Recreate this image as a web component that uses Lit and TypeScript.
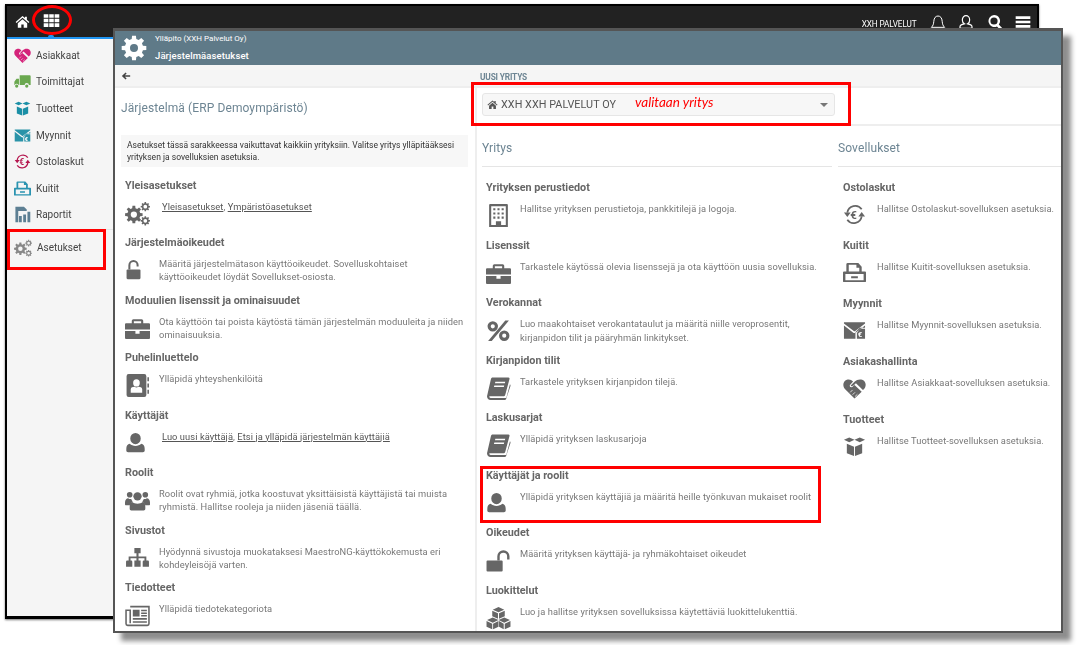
import { LitElement, html, css, svg } from "lit";
import { customElement } from "lit/decorators.js";

const gearPath = (cx: number, cy: number, r: number, hole: number, teeth = 8) => {
  let d = "";
  const step = (Math.PI * 2) / teeth;
  const ro = r, ri = r * 0.74;
  for (let i = 0; i < teeth; i++) {
    const a = i * step;
    const pts = [[ri, a - step * 0.32], [ro, a - step * 0.2], [ro, a + step * 0.2], [ri, a + step * 0.32]];
    for (const [rad, t] of pts) {
      d += `${d ? "L" : "M"}${(cx + rad * Math.cos(t)).toFixed(2)} ${(cy + rad * Math.sin(t)).toFixed(2)}`;
    }
  }
  d += `Z M${cx + hole} ${cy}a${hole} ${hole} 0 1 0 ${-2 * hole} 0a${hole} ${hole} 0 1 0 ${2 * hole} 0Z`;
  return d;
};

const I: Record<string, any> = {
  home: svg`<path d="M12 3 1 12.6l1.4 1.6L12 6l9.6 8.2 1.4-1.6-4-3.5V4.2h-3v2.3zM4.5 14.6V22h5.6v-5.4h3.8V22h5.6v-7.4L12 8.4z"/>`,
  grid: svg`<path d="M1 3h6.6v5.2H1zM8.8 3h6.4v5.2H8.8zM16.4 3H23v5.2h-6.6zM1 9.4h6.6v5.2H1zM8.8 9.4h6.4v5.2H8.8zM16.4 9.4H23v5.2h-6.6zM1 15.8h6.6V21H1zM8.8 15.8h6.4V21H8.8zM16.4 15.8H23V21h-6.6z"/>`,
  arrow: svg`<path d="M11 3.500 2 12l9 8.500 2.500-2.500-4.200-4H22v-4H9.300l4.200-4z"/>`,
  bell: svg`<path fill="none" stroke="currentColor" stroke-width="1.500" d="M2 20h20c-2.500-2-3.400-5-3.700-9C18 6 15.600 3 12 3S6 6 5.700 11C5.400 15 4.500 18 2 20z"/><path d="M9.500 21h5a2.500 2 0 0 1-5 0z"/>`,
  usero: svg`<path fill="none" stroke="currentColor" stroke-width="1.800" d="M12 2.500a5.500 6.500 0 0 1 5.500 6.500c0 2.500-1.200 4.600-3 5.700 3.800.8 6.500 2.500 6.500 4.300v2.500H3V19c0-1.800 2.700-3.500 6.500-4.300-1.800-1.100-3-3.200-3-5.700A5.500 6.500 0 0 1 12 2.500z"/>`,
  search: svg`<path d="M10.500 1.500a9 9 0 0 1 7.200 14.400l5 5-2.800 2.800-5-5A9 9 0 1 1 10.500 1.500zm0 3.600a5.400 5.400 0 1 0 0 10.800 5.400 5.400 0 0 0 0-10.800z"/>`,
  bars: svg`<path d="M1 3.500h22v4H1zM1 10h22v4H1zM1 16.500h22v4H1z"/>`,
  gear: svg`<path fill-rule="evenodd" d="${gearPath(12, 12, 11.500, 3.700)}"/>`,
  gears: svg`<path fill-rule="evenodd" d="${gearPath(8.500, 13, 8.500, 3)}"/><path fill-rule="evenodd" d="${gearPath(19.500, 5.500, 4.500, 1.800)}"/><path fill-rule="evenodd" d="${gearPath(19.500, 19, 4.500, 1.800)}"/>`,
  unlock: svg`<path d="M3 12h13.500a1.200 1.200 0 0 1 1.200 1.200v8.600a1.200 1.200 0 0 1-1.200 1.200H3a1.200 1.200 0 0 1-1.200-1.200v-8.600A1.200 1.200 0 0 1 3 12z"/><path fill="none" stroke="currentColor" stroke-width="2.300" d="M5 12V7a4.700 4.700 0 0 1 9.400 0v1.500"/>`,
  unlock2: svg`<path d="M1.500 12H15a1 1 0 0 1 1 1v8.500a1 1 0 0 1-1 1H1.500a1 1 0 0 1-1-1V13a1 1 0 0 1 1-1z"/><path fill="none" stroke="currentColor" stroke-width="2.300" d="M12 12V8a4.700 4.700 0 0 1 9.400 0v3"/>`,
  case: svg`<path fill-rule="evenodd" d="M8 3h8a1.500 1.500 0 0 1 1.500 1.500V7H23a1 1 0 0 1 1 1v5H0V8a1 1 0 0 1 1-1h5.500V4.500A1.500 1.500 0 0 1 8 3zm.500 2v2h7V5z"/><path d="M0 14.500h10V17h4v-2.500h10V21a1 1 0 0 1-1 1H1a1 1 0 0 1-1-1z"/>`,
  contact: svg`<path fill-rule="evenodd" d="M3.500 1h15A2 2 0 0 1 20.500 3v18a2 2 0 0 1-2 2h-15a2 2 0 0 1-2-2V3a2 2 0 0 1 2-2zM11 6a3.200 3.500 0 1 0 0 7 3.200 3.500 0 0 0 0-7zm-5.500 9.500V19h11v-3.500c0-1.500-2-2.300-3.500-2.300-.8.500-1.500.8-2 .8s-1.200-.3-2-.8c-1.500 0-3.500.8-3.500 2.300z"/><path d="M21.500 4H23v4h-1.500zM21.500 10H23v4h-1.500zM21.500 16H23v4h-1.500z"/>`,
  user: svg`<path d="M12 1a6 6.500 0 1 1 0 13 6 6.500 0 0 1 0-13zM5.500 13.500c1.500 1.500 4 2.500 6.500 2.500s5-1 6.500-2.500c2.500.5 4 2.500 4 5.500v2.500c0 1-1 1.500-2 1.500H3.500c-1 0-2-.5-2-1.500V19c0-3 1.500-5 4-5.500z"/>`,
  users: svg`<circle cx="4.500" cy="6.500" r="2.700"/><circle cx="19.500" cy="6.500" r="2.700"/><circle cx="12" cy="8" r="4"/><path d="M0 14c0-2.500 1.500-4.200 3-4.200 1 .8 2 1 3 .8.300 1 1 2 1.500 2.400-1.500.4-2.500 1.500-3 3.500H1c-.7 0-1-.5-1-1zM24 14c0-2.500-1.500-4.200-3-4.200-1 .8-2 1-3 .8-.3 1-1 2-1.500 2.400 1.500.4 2.500 1.500 3 3.500H23c.7 0 1-.5 1-1zM7 13.500c1.200 1 3 1.500 5 1.500s3.800-.5 5-1.500c1.800.3 2.500 2.200 2.500 4.500v2c0 1-.7 1.500-1.500 1.500H6c-.8 0-1.500-.5-1.500-1.500v-2c0-2.300.7-4.200 2.500-4.500z"/>`,
  sitemap: svg`<path d="M9 2h6v5h-2v3h7.500v4H22a1 1 0 0 1 1 1v5h-6v-5a1 1 0 0 1 1-1h.700v-2.200H13V14h2v6H9v-6h2v-2.200H5.300V14H6a1 1 0 0 1 1 1v5H1v-5a1 1 0 0 1 1-1h1.500v-4H11V7H9z"/>`,
  news: svg`<path fill="none" stroke="currentColor" stroke-width="1.500" d="M5 3.500h18v16.500a1.500 1.500 0 0 1-1.500 1.500H2.500A1.500 1.500 0 0 1 1 20V7h4v12.500"/><path d="M7.500 6.500h6.500v6.500H7.500zM15.500 6.500h5.500V8h-5.500zM15.500 9h5.500v1.500h-5.500zM15.500 11.500h5.500V13h-5.500zM7.500 14.500h13.500V16H7.500zM7.500 17.500h13.500V19H7.500z"/>`,
  building: svg`<path fill-rule="evenodd" d="M4 1h16a1 1 0 0 1 1 1v21H3V2a1 1 0 0 1 1-1zm1 2v18h4.500v-3.500h5V21H19V3z"/><path d="M7 5h2v2H7zM11 5h2v2h-2zM15 5h2v2h-2zM7 9h2v2H7zM11 9h2v2h-2zM15 9h2v2h-2zM7 13h2v2H7zM11 13h2v2h-2zM15 13h2v2h-2z"/>`,
  percent: svg`<path fill-rule="evenodd" d="M6.500 3a5 5 0 1 1 0 10 5 5 0 0 1 0-10zm0 3a2 2 0 1 0 0 4 2 2 0 0 0 0-4zM17.500 12a5 5 0 1 1 0 10 5 5 0 0 1 0-10zm0 3a2 2 0 1 0 0 4 2 2 0 0 0 0-4zM18.500 2.500H22L5.500 22H2z"/>`,
  book: svg`<path fill-rule="evenodd" d="M6.500 1.500H21.500c1 0 1.300.7 1 1.700L18.500 18c-.3 1.100-1 1.500-2 1.500H4c-.8 0-1 .5-.7 1 .2.400.6.500 1.200.5h14c.7 0 1-.2 1.200-.9l3.300-12.100c.5.300.7.900.5 1.500L19.400 21.800c-.2.800-.9 1.200-1.800 1.200H4.400C2.400 23 1 21.500 1 19.700c0-.5.1-1 .2-1.200L4.700 3c.2-.9.800-1.500 1.800-1.500zM9 5.500l-.4 1.500h9.500l.4-1.500zm-1 3.500-.4 1.500h9.500l.4-1.500z"/>`,
  cubes: svg`<path d="M12 1 6.500 3.500 12 6l5.500-2.500zM6 4.500v5.300l5.500 2.500V7zM18 4.500 12.500 7v5.300L18 9.800zM6.500 11 1 13.500 6.500 16l5.500-2.500zM.5 14.500v5.300L6 22.300V17zM12 14.500 6.800 17v5.300L12 19.800zM17.500 11 12 13.500l5.500 2.500 5.500-2.500zM12.500 14.500v5.300l4.500 2.500V17zM23.500 14.500 18 17v5.300l5.500-2.500z"/>`,
  heart: svg`<path d="M12 22.500 2 12.500C-.8 9.500 0 4 4 2.800c2.700-.8 4.800.2 6.500 2L7.500 8c-1 1-.3 2.600 1 2.600.8 0 1.400-.5 2-1l1.500-1.300 7.500 7.200zM20.800 13.500 13.500 6.500l-.9.800c-.9.800-2.500 2.300-3.800 2.300-.6 0-.9-.5-.5-.9l4-4C14.200 3 16.800 2 20 2.800 24 4 24.800 9.500 22 12.500z"/><g stroke="#fff" stroke-width=".8" fill="none"><path d="m12.500 20.500 2.500-2.500M10 18.500l2.500-2.500M7.500 16l2.500-2.500"/></g>`,
  truck: svg`<path d="M8 3h14a1.500 1.500 0 0 1 1.500 1.500V17H21a3 3 0 0 0-6 0H8z"/><path d="M7 8v9H6.500a3 3 0 0 0-5.500 0H.5v-4.500L3.500 8z"/><circle cx="3.800" cy="18.500" r="2.300"/><circle cx="18" cy="18.500" r="2.300"/>`,
  box: svg`<path d="M1 5 6.500 2.500 12 5 6.500 7.500zM12 5l5.500-2.500L23 5l-5.500 2.500zM4 9l7.500 3.200V22L4 19zM20 9l-7.500 3.200V22l7.500-3z"/>`,
  mail: svg`<path d="M1 3.500h22v1.200L12.800 12.500c-.5.400-1.100.4-1.600 0L1 4.700z"/><path d="M1 6.700l9.400 7.400c1 .8 2.200.8 3.200 0L23 6.700V9h-5.500L13 13.500V20.500H1zM14.500 14.500l3.500-4.300h5V20.500h-8.500z"/><text x="15.300" y="19.300" font-size="8" font-family="Roboto" font-weight="700" fill="#fff">€</text>`,
  cycle: svg`<path fill="none" stroke="currentColor" stroke-width="1.800" d="M4.500 10a8.300 8.300 0 0 1 15-3.500M19.500 14a8.300 8.300 0 0 1-15 3.500"/><path d="M1 10h7l-3.500 4.500zM23 14h-7l3.500-4.500z"/><text x="7.500" y="16.500" font-size="12" font-family="Roboto" font-weight="700">€</text>`,
  inbox: svg`<path fill-rule="evenodd" d="M5 2h11l3.500 4v5H23a1 1 0 0 1 1 1v9a1 1 0 0 1-1 1H1a1 1 0 0 1-1-1v-9a1 1 0 0 1 1-1h2.500V3.500A1.500 1.500 0 0 1 5 2zm1 2v7h11V7h-3V4zM2.500 13.500V20h19v-6.500zm6 2.500h7v2h-7z"/>`,
  chart: svg`<path d="M2 1h12l4 4v2H6v16H2zM19 8h4v15h-4zM13 12h4v11h-4zM7 14h4v9H7z"/>`,
};

const ic = (n: string, cls = "") => html`<svg class="ic ${cls}" viewBox="0 0 24 24" fill="currentColor">${I[n]}</svg>`;

type Item = { t: string; i: string; d?: string; links?: string[]; cls?: string };

const left: Item[] = [
  { t: "Yleisasetukset", i: "gears", links: ["Yleisasetukset", "Ympäristöasetukset"] },
  { t: "Järjestelmäoikeudet", i: "unlock", cls: "sm", d: "Määritä järjestelmätason käyttöoikeudet. Sovelluskohtaiset käyttöoikeudet löydät Sovellukset-osiosta." },
  { t: "Moduulien lisenssit ja ominaisuudet", i: "case", d: "Ota käyttöön tai poista käytöstä tämän järjestelmän moduuleita ja niiden ominaisuuksia." },
  { t: "Puhelinluettelo", i: "contact", d: "Ylläpidä yhteyshenkilöitä" },
  { t: "Käyttäjät", i: "user", cls: "sm", links: ["Luo uusi käyttäjä", "Etsi ja ylläpidä järjestelmän käyttäjiä"] },
  { t: "Roolit", i: "users", d: "Roolit ovat ryhmiä, jotka koostuvat yksittäisistä käyttäjistä tai muista ryhmistä. Hallitse rooleja ja niiden jäseniä täällä." },
  { t: "Sivustot", i: "sitemap", d: "Hyödynnä sivustoja muokataksesi MaestroNG-käyttökokemusta eri kohdeyleisöjä varten." },
  { t: "Tiedotteet", i: "news", d: "Ylläpidä tiedotekategoriota" },
];
const mid: Item[] = [
  { t: "Yrityksen perustiedot", i: "building", d: "Hallitse yrityksen perustietoja, pankkitilejä ja logoja." },
  { t: "Lisenssit", i: "case", d: "Tarkastele käytössä olevia lisenssejä ja ota käyttöön uusia sovelluksia." },
  { t: "Verokannat", i: "percent", d: "Luo maakohtaiset verokantataulut ja määritä niille veroprosentit, kirjanpidon tilit ja pääryhmän linkitykset." },
  { t: "Kirjanpidon tilit", i: "book", d: "Tarkastele yrityksen kirjanpidon tilejä." },
  { t: "Laskusarjat", i: "book", d: "Ylläpidä yrityksen laskusarjoja" },
  { t: "Käyttäjät ja roolit", i: "user", cls: "sm", d: "Ylläpidä yrityksen käyttäjiä ja määritä heille työnkuvan mukaiset roolit" },
  { t: "Oikeudet", i: "unlock2", d: "Määritä yrityksen käyttäjä- ja ryhmäkohtaiset oikeudet" },
  { t: "Luokittelut", i: "cubes", d: "Luo ja hallitse yrityksen sovelluksissa käytettäviä luokittelukenttiä." },
];
const apps: Item[] = [
  { t: "Ostolaskut", i: "cycle", d: "Hallitse Ostolaskut-sovelluksen asetuksia." },
  { t: "Kuitit", i: "inbox", d: "Hallitse Kuitit-sovelluksen asetuksia." },
  { t: "Myynnit", i: "mail", d: "Hallitse Myynnit-sovelluksen asetuksia." },
  { t: "Asiakashallinta", i: "heart", d: "Hallitse Asiakkaat-sovelluksen asetuksia." },
  { t: "Tuotteet", i: "box", d: "Hallitse Tuotteet-sovelluksen asetuksia." },
];
const nav = [
  { t: "Asiakkaat", i: "heart", c: "#d4237a" },
  { t: "Toimittajat", i: "truck", c: "#6aa84f" },
  { t: "Tuotteet", i: "box", c: "#1b8fa6" },
  { t: "Myynnit", i: "mail", c: "#2a93a8" },
  { t: "Ostolaskut", i: "cycle", c: "#b5174f" },
  { t: "Kuitit", i: "inbox", c: "#2a93b0" },
  { t: "Raportit", i: "chart", c: "#5d7f93" },
];

@customElement("app-root")
export class AppRoot extends LitElement {
  static styles = css`
    :host { display: block; position: relative; width: 1080px; height: 645px; overflow: hidden; background: #fff; font-family: Roboto, "Liberation Sans", sans-serif; }
    * { box-sizing: border-box; }
    .ic { display: block; flex: none; }
    .back { position: absolute; left: 5px; top: 4px; width: 1034px; height: 615px; border: 2px solid #000; border-bottom-width: 3px; background: #f5f5f5; display: flex; flex-direction: column; box-shadow: 0 1px 2px #777; filter: blur(.3px); }
    .top { height: 33px; flex: none; background: #222; border-bottom: 2px solid #2196f3; display: flex; align-items: center; padding: 0 0 1px 8px; gap: 13px; color: #fff; position: relative; }
    .top .ic.h { width: 15px; height: 15px; }
    .top .ic.g { width: 17px; height: 17px; margin-top: -2px; }
    .notch { position: absolute; left: 41px; bottom: 0; width: 6px; height: 2px; background: #2196f3; border-radius: 3px 3px 0 0; }
    .tools { margin-left: auto; margin-right: 6px; display: flex; align-items: center; height: 100%; }
    .tools span { font-size: 8.2px; margin-right: 13px; letter-spacing: -.1px; margin-top: 5px; }
    .tools .ic { width: 16px; height: 16px; margin-right: 12.5px; margin-top: 1px; }
    .tools .ic:last-child { margin-right: 0; }
    .side { width: 106px; padding-top: 3px; }
    .nav { height: 26.6px; display: flex; align-items: center; gap: 5px; padding-left: 7px; font-size: 10px; color: #444; }
    .nav .ic { width: 17px; height: 17px; }
    .nav.set { height: 40px; margin-top: 1px; border-top: 1px solid #e6e6e6; padding-bottom: 4px; gap: 5px; }
    .nav.set .ic { width: 18px; height: 18px; color: #888; }

    .front { position: absolute; left: 113px; top: 28px; width: 950px; height: 605px; border: 2px solid #555; border-top-width: 3px; background: #fff; box-shadow: 8px 8px 5px #8e8e8e; display: flex; flex-direction: column; overflow: hidden; filter: blur(.3px); }
    .hdr { height: 34px; flex: none; background: #5f7a88; color: #fff; display: flex; align-items: center; padding-left: 6px; gap: 8px; }
    .hdr .ic { width: 26px; height: 26px; }
    .hdr .t1 { font-size: 8px; line-height: 10px; }
    .hdr .t2 { font-size: 9.5px; font-weight: 500; line-height: 12px; margin-top: 6px; letter-spacing: .1px; }
    .sub { height: 23px; flex: none; background: #f5f5f5; border-bottom: 2px solid #eee; display: flex; align-items: center; color: #444; }
    .sub .back-arrow { width: 362px; padding-left: 6px; }
    .sub .back-arrow .ic { width: 10px; height: 10px; }
    .sub .uusi { font-size: 8.3px; font-weight: 700; color: #6d8593; padding: 2px 0 0 3px; letter-spacing: -.15px; }
    .main { flex: 1; display: flex; min-height: 0; }
    .col-l { width: 360px; flex: none; padding: 0 6px 0 6px; }
    .col-r { flex: 1; border-left: 2px solid #eee; min-width: 0; }
    h2 { margin: 0; font-weight: 400; color: #6d8593; }
    .col-l h2 { font-size: 12px; letter-spacing: .1px; line-height: 16px; padding-top: 12px; }
    .info { margin-top: 19px; background: #f7f7f7; font-size: 8.5px; line-height: 12px; color: #333; padding: 4px 6px 3px; height: 32px; width: 347px; letter-spacing: .02px; }
    .list-l { padding: 11.5px 0 0 4px; }
    .item { height: 57.5px; }
    .item h3 { margin: 0; font-size: 10.8px; font-weight: 700; color: #666; line-height: 14px; }
    .row { display: flex; align-items: flex-start; margin-top: 7px; color: #666; }
    .iconbox { width: 34px; flex: none; height: 26px; padding-top: 1px; }
    .iconbox .ic { width: 25px; height: 25px; }
    .iconbox .ic.sm { width: 21px; height: 23px; }
    .d { font-size: 9.3px; line-height: 13px; color: #777; letter-spacing: .08px; max-width: 306px; }
    .d a { color: #555; text-decoration: underline; padding-left: 3px; }
    .d a.next { padding-left: 0; }
    .dd-wrap { height: 38px; border-bottom: 2px solid #eee; padding: 5px 0 0 5px; }
    .dd { width: 353px; height: 23px; background: #f7f7f7; border: 1px solid #e6e6e6; border-radius: 3px; display: flex; align-items: center; padding: 0 6px 0 4px; font-size: 10.8px; color: #555; gap: 3px; letter-spacing: .05px; }
    .dd .ic { width: 11px; height: 11px; }
    .dd .caret { margin-left: auto; width: 0; height: 0; border: 4px solid transparent; border-top: 4px solid #777; border-bottom: 0; }
    .cols { display: flex; }
    .mid { width: 361px; flex: none; padding: 0 6px 0 5px; }
    .apps { flex: 1; }
    .cols h2 { font-size: 12px; letter-spacing: .1px; line-height: 16px; padding-top: 14px; height: 41px; border-bottom: 1px solid #e5e5e5; }
    .mid-list { padding: 14px 0 0 4px; }
    .mid-list .d { line-height: 14px; }
    .apps-list { padding: 14px 0 0 5px; }
    .apps-list .item { height: 58px; }
    .apps-list .iconbox .ic { width: 23px; height: 23px; }
    .apps-list .d { white-space: nowrap; }

    .mark { position: absolute; border: 3px solid #f00; }
    .m1 { left: 32px; top: 5px; width: 40px; height: 30px; border-radius: 50%; }
    .m2 { left: 7px; top: 229px; width: 99px; height: 41px; }
    .m3 { left: 471px; top: 82px; width: 380px; height: 44px; }
    .m4 { left: 480px; top: 466px; width: 341px; height: 57px; }
    .note { position: absolute; left: 635px; top: 94px; color: #f00; font: italic 13.5px Lato, sans-serif; line-height: 16px; }
  `;

  private item(x: Item) {
    return html`<div class="item">
      <h3>${x.t}</h3>
      <div class="row">
        <div class="iconbox">${ic(x.i, x.cls ?? "")}</div>
        <div class="d">${x.links
          ? html`<a>${x.links[0]}</a>, <a class="next">${x.links[1]}</a>`
          : x.d}</div>
      </div>
    </div>`;
  }

  render() {
    return html`
      <div class="back">
        <div class="top">
          ${ic("home", "h")}${ic("grid", "g")}
          <div class="notch"></div>
          <div class="tools"><span>XXH PALVELUT</span>${ic("bell")}${ic("usero")}${ic("search")}${ic("bars")}</div>
        </div>
        <div class="side">
          ${nav.map(n => html`<div class="nav"><span style="color:${n.c}">${ic(n.i)}</span>${n.t}</div>`)}
          <div class="nav set">${ic("gears")}<span>Asetukset</span></div>
        </div>
      </div>
      <div class="front">
        <div class="hdr">
          ${ic("gear")}
          <div><div class="t1">Ylläpito (XXH Palvelut Oy)</div><div class="t2">Järjestelmäasetukset</div></div>
        </div>
        <div class="sub"><div class="back-arrow">${ic("arrow")}</div><div class="uusi">UUSI YRITYS</div></div>
        <div class="main">
          <div class="col-l">
            <h2>Järjestelmä (ERP Demoympäristö)</h2>
            <div class="info">Asetukset tässä sarakkeessa vaikuttavat kaikkiin yrityksiin. Valitse yritys ylläpitääksesi yrityksen ja sovelluksien asetuksia.</div>
            <div class="list-l">${left.map(x => this.item(x))}</div>
          </div>
          <div class="col-r">
            <div class="dd-wrap"><div class="dd">${ic("home")}<span>XXH XXH PALVELUT OY</span><span class="caret"></span></div></div>
            <div class="cols">
              <div class="mid"><h2>Yritys</h2><div class="mid-list">${mid.map(x => this.item(x))}</div></div>
              <div class="apps"><h2>Sovellukset</h2><div class="apps-list">${apps.map(x => this.item(x))}</div></div>
            </div>
          </div>
        </div>
      </div>
      <div class="mark m1"></div>
      <div class="mark m2"></div>
      <div class="mark m3"></div>
      <div class="mark m4"></div>
      <div class="note">valitaan yritys</div>
    `;
  }
}
